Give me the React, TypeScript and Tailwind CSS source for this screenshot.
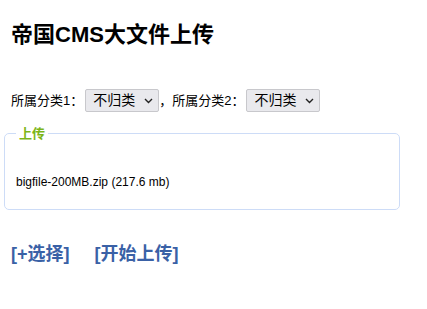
function Select() {
  return (
    <div className="relative ml-[2px] w-[74px] h-[23px]">
      <select className="appearance-none block box-border w-[74px] h-[23px] min-h-[23px] py-0 pl-[7px] pr-[20px] bg-[#e9e9ed] border border-[#c8c8cc] rounded-[2px] text-[14px] leading-[21px] text-black">
        <option>不归类</option>
      </select>
      <svg
        className="absolute right-[6px] top-[9px] pointer-events-none"
        width="9"
        height="6"
        viewBox="0 0 9 6"
        fill="none"
        stroke="#222"
        strokeWidth="1.4"
      >
        <path d="M1 1l3.5 3.5L8 1" />
      </svg>
    </div>
  );
}

export default function App() {
  const font = { fontFamily: '"Liberation Sans", Arial, "Noto Sans CJK SC", sans-serif' };
  return (
    <div className="w-[427px] h-[309px] bg-white text-black px-[4px]" style={font}>
      <h1 className="pl-[7px] pt-[22px] text-[22px] font-bold leading-[26px]">帝国CMS大文件上传</h1>

      <div className="mt-[41px] pl-[7px] flex items-center text-[13px] h-[23px]">
        <span>所属分类1：</span>
        <Select />
        <span>，所属分类2：</span>
        <Select />
      </div>

      <fieldset className="mt-[14px] w-[396px] h-[84px] border border-[#cddcf7] rounded-[5px] px-[11px]">
        <legend className="px-[3px] text-[13px] font-bold text-[#7cb518] leading-[15px]">上传</legend>
        <div className="pt-[32px] text-[12px]">bigfile-200MB.zip (217.6 mb)</div>
      </fieldset>

      <div className="mt-[33px] pl-[7px] flex gap-[25px] text-[18px] font-bold text-[#3a61a6] leading-[22px]">
        <span>[+选择]</span>
        <span>[开始上传]</span>
      </div>
    </div>
  );
}
